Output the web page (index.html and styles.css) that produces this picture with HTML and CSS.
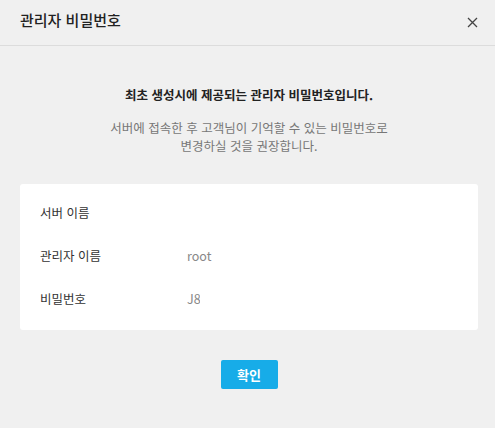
FILE: index.html
```html
<!DOCTYPE html>
<html lang="ko">
<head>
    <meta charset="UTF-8">
    <meta name="viewport" content="width=device-width, initial-scale=1.0">
    <title>관리자 비밀번호</title>
    <link rel="stylesheet" href="styles.css">
</head>
<body>
    <div class="modal">
        <div class="modal-header">
            <h2 class="modal-title">관리자 비밀번호</h2>
            <button class="close-btn" aria-label="닫기">
                <svg width="11" height="11" viewBox="0 0 11 11">
                    <path d="M1 1L10 10M10 1L1 10" stroke="#444" stroke-width="1.3" fill="none"/>
                </svg>
            </button>
        </div>
        <div class="modal-body">
            <p class="notice">최초 생성시에 제공되는 관리자 비밀번호입니다.</p>
            <p class="desc">서버에 접속한 후 고객님이 기억할 수 있는 비밀번호로</p>
            <p class="desc">변경하실 것을 권장합니다.</p>
            <div class="info-card">
                <div class="info-row">
                    <span class="label">서버 이름</span>
                    <span class="value"></span>
                </div>
                <div class="info-row">
                    <span class="label">관리자 이름</span>
                    <span class="value">root</span>
                </div>
                <div class="info-row">
                    <span class="label">비밀번호</span>
                    <span class="value secret">J8</span>
                </div>
            </div>
            <div class="actions">
                <button class="confirm-btn">확인</button>
            </div>
        </div>
    </div>
</body>
</html>
```
FILE: styles.css
```css
body {
    margin: 0;
    background-color: #f0f0f0;
    font-family: "Noto Sans CJK KR", "Noto Sans", sans-serif;
    color: #333;
}

.modal {
    width: 495px;
    height: 428px;
    background-color: #f0f0f0;
}

.modal-header {
    display: flex;
    align-items: center;
    justify-content: space-between;
    height: 45px;
    padding: 0 17px 0 20px;
    border-bottom: 1px solid #dcdcdc;
}

.modal-title {
    margin: 0;
    font-size: 15px;
    font-weight: 500;
    color: #222;
    line-height: 20px;
    margin-top: -6px;
}

.close-btn {
    border: none;
    background: none;
    padding: 0;
    width: 11px;
    height: 11px;
    cursor: pointer;
    display: flex;
}

.modal-body {
    padding: 39px 17px 0 20px;
}

.notice {
    margin: 0;
    text-align: center;
    font-size: 12.5px;
    font-weight: 700;
    color: #222;
    line-height: 20px;
}

.desc {
    margin: 0;
    text-align: center;
    font-size: 12.5px;
    color: #777;
    line-height: 18px;
}

.notice + .desc {
    margin-top: 14px;
}

.info-card {
    margin-top: 29px;
    background-color: #fff;
    border-radius: 3px;
    padding: 7px 20px 10px;
}

.info-row {
    display: flex;
    align-items: center;
    height: 43px;
    font-size: 12.5px;
}

.label {
    width: 147px;
    color: #333;
}

.value {
    color: #888;
}

.secret {
    display: inline-block;
    width: 13px;
    overflow: hidden;
    white-space: nowrap;
}

.actions {
    display: flex;
    justify-content: center;
    margin-top: 30px;
}

.confirm-btn {
    width: 57px;
    height: 29px;
    border: none;
    border-radius: 2px;
    background-color: #17ace8;
    color: #fff;
    font-family: inherit;
    font-size: 13px;
    font-weight: 700;
    cursor: pointer;
}
```
